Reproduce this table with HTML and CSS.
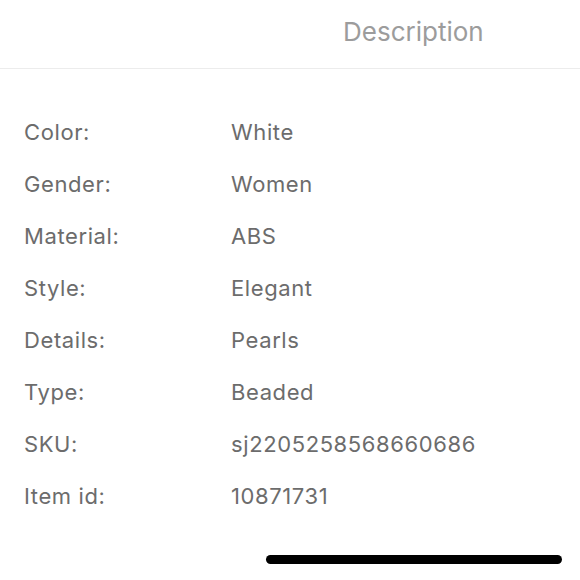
FILE: index.html
```html
<!DOCTYPE html>
<html>
<head>
<meta charset="utf-8">
<link rel="stylesheet" href="styles.css">
</head>
<body>
<div class="screen">
  <div class="header"><span class="title">Description</span></div>
  <div class="specs">
    <div class="row"><span class="label">Color:</span><span class="value">White</span></div>
    <div class="row"><span class="label">Gender:</span><span class="value">Women</span></div>
    <div class="row"><span class="label">Material:</span><span class="value">ABS</span></div>
    <div class="row"><span class="label">Style:</span><span class="value">Elegant</span></div>
    <div class="row"><span class="label">Details:</span><span class="value">Pearls</span></div>
    <div class="row"><span class="label">Type:</span><span class="value">Beaded</span></div>
    <div class="row"><span class="label">SKU:</span><span class="value">sj2205258568660686</span></div>
    <div class="row"><span class="label">Item id:</span><span class="value">10871731</span></div>
  </div>
  <div class="home-bar"><div class="indicator"></div></div>
</div>
</body>
</html>
```
FILE: styles.css
```css
html, body {
  margin: 0;
  padding: 0;
  background: #fff;
}
.screen {
  width: 580px;
  height: 580px;
  overflow: hidden;
  font-family: Inter, "Liberation Sans", Arial, sans-serif;
  display: flex;
  flex-direction: column;
}
.header {
  height: 68px;
  border-bottom: 1px solid #ececec;
  box-sizing: content-box;
  display: flex;
  align-items: center;
  padding-left: 343px;
}
.title {
  font-size: 26px;
  color: #9c9c9c;
  margin-top: -6px;
}
.specs {
  display: flex;
  flex-direction: column;
  padding-top: 50px;
}
.row {
  display: flex;
  height: 52px;
  align-items: flex-start;
  font-size: 22px;
  letter-spacing: 0.6px;
  color: #6c6c6c;
  line-height: 26px;
}
.label {
  width: 207px;
  padding-left: 24px;
}
.home-bar {
  margin-top: auto;
  height: 25px;
  display: flex;
  padding-left: 266px;
}
.indicator {
  width: 296px;
  height: 9px;
  background: #000;
  border-radius: 5px;
}
```
